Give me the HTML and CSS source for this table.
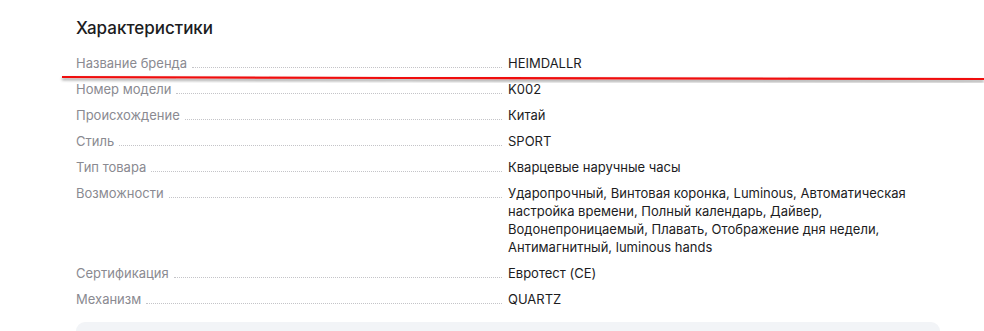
FILE: index.html
```html
<!DOCTYPE html>
<html lang="ru">
<head>
    <meta charset="UTF-8">
    <meta name="viewport" content="width=device-width, initial-scale=1.0">
    <title>Характеристики</title>
    <link rel="stylesheet" href="styles.css">
</head>
<body>

<div class="specs">
    <h2 class="specs-title">Характеристики</h2>

    <div class="spec-row">
        <div class="spec-name"><span>Название бренда</span><i class="dots"></i></div>
        <div class="spec-value">HEIMDALLR</div>
    </div>
    <div class="spec-row">
        <div class="spec-name"><span>Номер модели</span><i class="dots"></i></div>
        <div class="spec-value">K002</div>
    </div>
    <div class="spec-row">
        <div class="spec-name"><span>Происхождение</span><i class="dots"></i></div>
        <div class="spec-value">Китай</div>
    </div>
    <div class="spec-row">
        <div class="spec-name"><span>Стиль</span><i class="dots"></i></div>
        <div class="spec-value">SPORT</div>
    </div>
    <div class="spec-row">
        <div class="spec-name"><span>Тип товара</span><i class="dots"></i></div>
        <div class="spec-value">Кварцевые наручные часы</div>
    </div>
    <div class="spec-row">
        <div class="spec-name"><span>Возможности</span><i class="dots"></i></div>
        <div class="spec-value">Ударопрочный, Винтовая коронка, Luminous, Автоматическая настройка времени, Полный календарь, Дайвер, Водонепроницаемый, Плавать, Отображение дня недели, Антимагнитный, luminous hands</div>
    </div>
    <div class="spec-row">
        <div class="spec-name"><span>Сертификация</span><i class="dots"></i></div>
        <div class="spec-value">Евротест (CE)</div>
    </div>
    <div class="spec-row">
        <div class="spec-name"><span>Механизм</span><i class="dots"></i></div>
        <div class="spec-value">QUARTZ</div>
    </div>

    <div class="specs-note"></div>
</div>

<!-- пометка маркером поверх таблицы -->
<svg class="marker" width="984" height="100" viewBox="0 0 984 100">
    <defs>
        <filter id="marker-shadow" x="-5%" y="-200%" width="110%" height="500%">
            <feDropShadow dx="0" dy="2" stdDeviation="1.6" flood-color="#000" flood-opacity="0.45"/>
        </filter>
    </defs>
    <path d="M62 77 L400 78 L984 79" stroke="#f01010" stroke-width="2.2" fill="none" filter="url(#marker-shadow)"/>
</svg>

</body>
</html>
```

FILE: styles.css
```css
body {
    font-family: Inter, "Noto Sans", sans-serif;
    background-color: #fff;
    margin: 0;
    padding: 0;
}
.specs {
    width: 864px;
    margin-left: 76px;
    padding-top: 17px;
}
.specs-title {
    font-size: 17px;
    line-height: 22px;
    font-weight: 500;
    color: #1c1c1e;
    margin: 0 0 11px;
}
.spec-row {
    display: grid;
    grid-template-columns: 432px 1fr;
    font-size: 13px;
    line-height: 18px;
    padding: 4px 0;
}
.spec-name {
    display: flex;
    align-items: baseline;
    color: #8a8a91;
    padding-right: 6px;
}
.spec-name .dots {
    flex: 1;
    margin-left: 5px;
    border-bottom: 1px dotted #c4c4c8;
}
.spec-value {
    color: #1c1c1e;
}
.specs-note {
    margin-top: 10px;
    height: 9px;
    background: #f2f4f7;
    border-radius: 12px 12px 0 0;
}
.marker {
    position: absolute;
    top: 0;
    left: 0;
    pointer-events: none;
}
```
